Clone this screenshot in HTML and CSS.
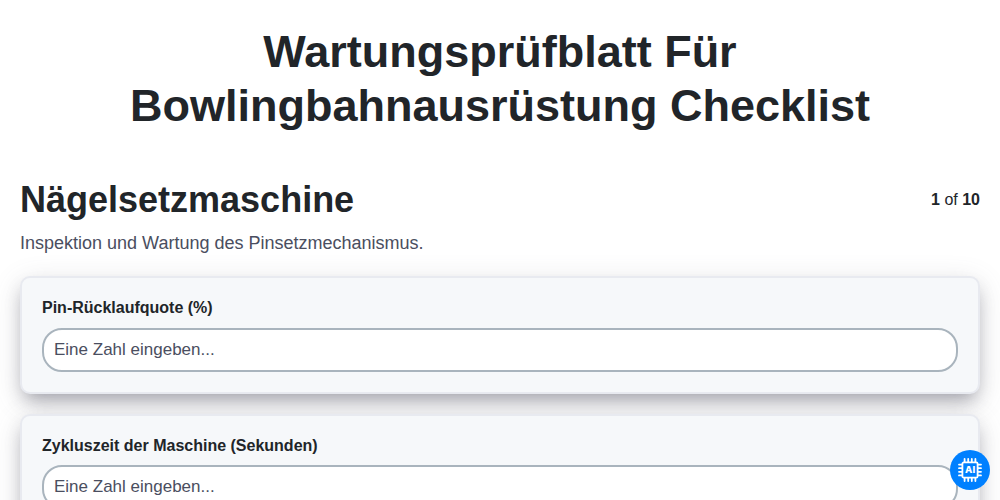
FILE: index.html
```
<!DOCTYPE html>
<html lang="de">
<head>
    <meta charset="UTF-8">
    <meta name="viewport" content="width=device-width, initial-scale=1.0">
    <title>Wartungsprüfblatt Für Bowlingbahnausrüstung Checklist</title>
    <link rel="stylesheet" href="styles.css">
</head>
<body>
    <h1>Wartungsprüfblatt Für Bowlingbahnausrüstung Checklist</h1>

    <form class="checklist">
        <div class="section-header">
            <h2>Nägelsetzmaschine</h2>
            <span class="page-count"><b>1</b> of <b>10</b></span>
        </div>
        <p class="section-info">Inspektion und Wartung des Pinsetzmechanismus.</p>

        <div class="field">
            <label for="returnRate">Pin-Rücklaufquote (%)</label>
            <input type="number" id="returnRate" placeholder="Eine Zahl eingeben...">
        </div>

        <div class="field">
            <label for="cycleTime">Zykluszeit der Maschine (Sekunden)</label>
            <input type="number" id="cycleTime" placeholder="Eine Zahl eingeben...">
        </div>
    </form>

    <button type="button" class="ai-button" aria-label="AI">
        <svg viewBox="0 0 24 24" width="24" height="24" fill="none" stroke="#fff" stroke-width="1.8">
            <rect x="4.4" y="4.4" width="15.2" height="15.2" rx="1.4"/>
            <path stroke-linecap="round" d="M6.6 1v3M10.2 1v3M13.8 1v3M17.4 1v3M6.6 20v3M10.2 20v3M13.8 20v3M17.4 20v3M1 6.6h3M1 10.2h3M1 13.8h3M1 17.4h3M20 6.6h3M20 10.2h3M20 13.8h3M20 17.4h3" stroke-width="1.8"/>
            <text x="12.2" y="15.4" text-anchor="middle" class="ai-label">AI</text>
        </svg>
    </button>
</body>
</html>
```
FILE: styles.css
```
* {
    box-sizing: border-box;
}

body {
    font-family: "Liberation Sans", Arial, sans-serif;
    font-size: 16px;
    line-height: 24px;
    color: #212529;
    background: #fff;
    margin: 0;
    padding: 25px 20px 0;
    height: 500px;
    overflow: hidden;
}

h1 {
    font-size: 45px;
    line-height: 54px;
    text-align: center;
    margin: 0 0 45px;
}

.section-header {
    display: flex;
    justify-content: space-between;
    align-items: center;
}

h2 {
    font-size: 36px;
    line-height: 43px;
    margin: 0;
}

.section-info {
    font-size: 18px;
    line-height: 27px;
    color: #4a4e60;
    margin: 9px 0 19.4px;
}

.field {
    height: 117.6px;
    padding: 17.8px 20px 20px;
    margin-bottom: 20px;
    background: #f6f8fa;
    border: 2px solid #e8eaf0;
    border-radius: 10px;
    box-shadow: 0 7px 29px rgba(100, 100, 111, 0.2), 0 10px 18px -5px rgba(50, 50, 70, 0.4);
}

label {
    display: block;
    font-weight: bold;
    margin-bottom: 7.6px;
}

input {
    display: block;
    width: 100%;
    height: 44px;
    padding: 0 10px;
    font-family: inherit;
    font-size: 17px;
    background: #fff;
    border: 2px solid #a9b4bd;
    border-radius: 20px;
}

input::placeholder {
    color: #4a4e60;
    opacity: 1;
}

.ai-button {
    position: fixed;
    right: 10px;
    bottom: 10px;
    display: flex;
    align-items: center;
    justify-content: center;
    width: 40px;
    height: 40px;
    padding: 0;
    background: #0080ff;
    border: none;
    border-radius: 50%;
    cursor: pointer;
}

.ai-label {
    font-family: "Inter", sans-serif;
    font-size: 9.5px;
    font-weight: 800;
    letter-spacing: 0.3px;
    fill: #fff;
    stroke: none;
}
```
